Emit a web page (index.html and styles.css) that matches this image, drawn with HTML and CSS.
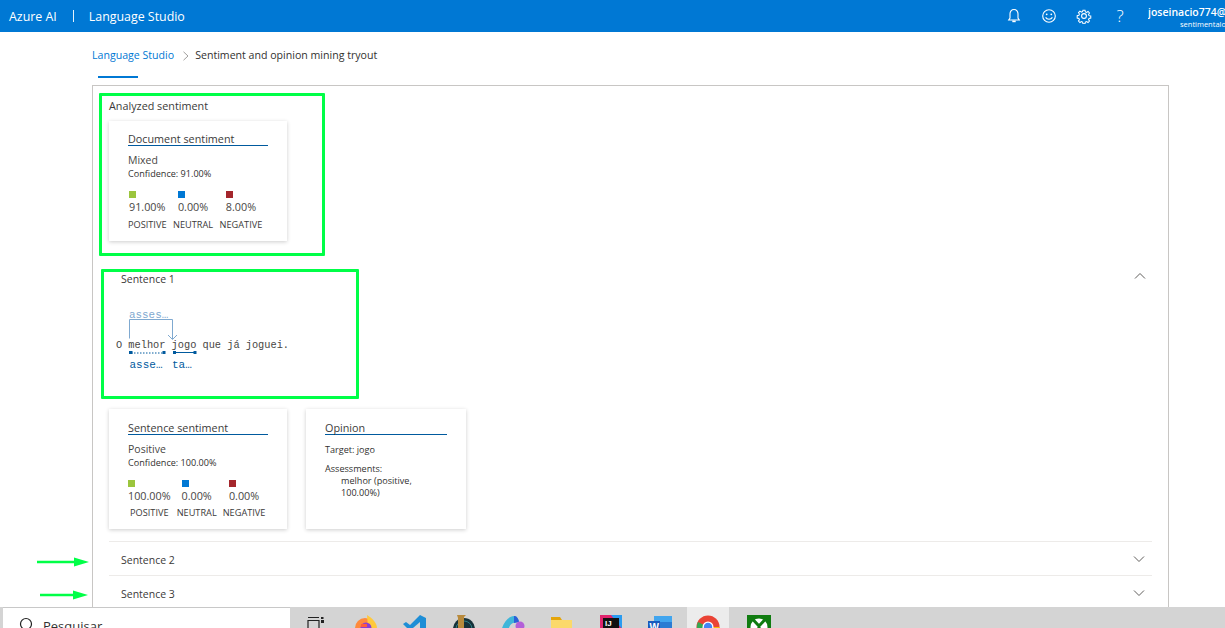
FILE: index.html
```html
<!DOCTYPE html>
<html lang="pt">
<head>
<meta charset="utf-8">
<title>Language Studio</title>
<link rel="stylesheet" href="styles.css">
</head>
<body>
<header class="topbar">
  <span class="brand">Azure AI</span>
  <span class="brand-sep"></span>
  <span class="brand">Language Studio</span>
  <div class="top-icons">
    <svg class="ti" width="16" height="16" viewBox="0 0 16 16"><path d="M8 1.500c-2.600 0-4 2-4 4.300V10l-1.300 2h10.600L12 10V5.800c0-2.300-1.400-4.300-4-4.300z" fill="none" stroke="#fff" stroke-width="1.100"/><path d="M6.300 12.500h3.400v1.700H6.300z" fill="#fff"/></svg>
    <svg class="ti" width="16" height="16" viewBox="0 0 16 16"><circle cx="8" cy="8" r="6.300" fill="none" stroke="#fff" stroke-width="1.100"/><circle cx="5.700" cy="6.300" r=".9" fill="#fff"/><circle cx="10.300" cy="6.300" r=".9" fill="#fff"/><path d="M4.600 9.400c1.500 2.500 5.300 2.500 6.800 0" fill="none" stroke="#fff" stroke-width="1.100"/></svg>
    <svg class="ti" width="16" height="16" viewBox="0 0 16 16"><circle cx="8" cy="8" r="2.400" fill="none" stroke="#fff" stroke-width="1.100"/><path d="M6.800 1.300h2.400l.4 2 1.400.6 1.700-1.100 1.700 1.700-1.100 1.700.6 1.400 2 .4v2.400l-2 .4-.6 1.400 1.100 1.700-1.700 1.700-1.700-1.100-1.400.6-.4 2H6.800l-.4-2-1.400-.6-1.700 1.100-1.700-1.700 1.100-1.700-.6-1.400-2-.4V7.600l2-.4.6-1.400-1.100-1.700 1.700-1.700L5 3.500l1.400-.6z" transform="translate(1.100 1.100) scale(.86)" fill="none" stroke="#fff" stroke-width="1.200"/></svg>
    <span class="help">?</span>
  </div>
  <div class="user">
    <span class="user-name">joseinacio774@</span>
    <span class="user-sub">sentimentalo</span>
  </div>
</header>

<nav class="crumbs">
  <span class="crumb-link">Language Studio</span>
  <svg class="crumb-sep" width="8" height="10" viewBox="0 0 8 10"><path d="M1.500 .8 6 5 1.500 9.200" fill="none" stroke="#a19f9d" stroke-width="1"/></svg>
  <span class="crumb-cur">Sentiment and opinion mining tryout</span>
</nav>
<div class="tab-mark"></div>

<main class="panel">
  <h2 class="panel-title">Analyzed sentiment</h2>
  <section class="card doc-card">
    <h3 class="card-title">Document sentiment</h3>
    <div class="verdict">Mixed</div>
    <div class="conf">Confidence: 91.00%</div>
    <div class="scores">
      <div class="score"><div class="val"><i class="sq green"></i><span class="pct">91.00%</span></div><span class="lab">POSITIVE</span></div>
      <div class="score"><div class="val"><i class="sq blue"></i><span class="pct">0.00%</span></div><span class="lab">NEUTRAL</span></div>
      <div class="score"><div class="val"><i class="sq red"></i><span class="pct">8.00%</span></div><span class="lab">NEGATIVE</span></div>
    </div>
  </section>

  <div class="acc-head first">
    <span>Sentence 1</span>
    <svg class="chev-up" width="12" height="8" viewBox="0 0 12 8"><path d="M1 6.500 6 1.500l5 5" fill="none" stroke="#605e5c" stroke-width="1"/></svg>
  </div>
  <svg class="dep" width="200" height="88" viewBox="0 0 200 88">
    <text class="dep-top" x="13" y="20">asses…</text>
    <path d="M13.500 40.500V21.500H56.500V41" fill="none" stroke="#7fa9d0" stroke-width="1"/>
    <path d="M52 37l4.500 4.500L61 37" fill="none" stroke="#7fa9d0" stroke-width="1"/>
    <text class="dep-text" x="0" y="50">O melhor jogo que já joguei.</text>
    <path d="M15 55H49" stroke="#005a9e" stroke-width="1" stroke-dasharray="1.500 1.500"/>
    <rect x="13" y="53" width="3.500" height="3" fill="#005a9e"/>
    <rect x="46.500" y="53" width="3" height="3" fill="#005a9e"/>
    <path d="M58 54.500H80" stroke="#005a9e" stroke-width="1"/>
    <rect x="57" y="53" width="3" height="3" fill="#005a9e"/>
    <rect x="77.500" y="53" width="3" height="3" fill="#005a9e"/>
    <text class="dep-lab" x="13.500" y="69.500">asse…</text>
    <text class="dep-lab" x="56" y="69.500">ta…</text>
  </svg>

  <div class="card-row">
    <section class="card doc-card">
      <h3 class="card-title">Sentence sentiment</h3>
      <div class="verdict">Positive</div>
      <div class="conf">Confidence: 100.00%</div>
      <div class="scores">
        <div class="score"><div class="val"><i class="sq green"></i><span class="pct">100.00%</span></div><span class="lab">POSITIVE</span></div>
        <div class="score"><div class="val"><i class="sq blue"></i><span class="pct">0.00%</span></div><span class="lab">NEUTRAL</span></div>
        <div class="score"><div class="val"><i class="sq red"></i><span class="pct">0.00%</span></div><span class="lab">NEGATIVE</span></div>
      </div>
    </section>
    <section class="card op-card">
      <h3 class="card-title">Opinion</h3>
      <div class="op-line">Target: jogo</div>
      <div class="op-line op-gap">Assessments:</div>
      <div class="op-ind">melhor (positive, 100.00%)</div>
    </section>
  </div>

  <div class="acc-head rule">
    <span>Sentence 2</span>
    <svg width="12" height="8" viewBox="0 0 12 8"><path d="M1 1.500 6 6.500l5-5" fill="none" stroke="#605e5c" stroke-width="1"/></svg>
  </div>
  <div class="acc-head rule">
    <span>Sentence 3</span>
    <svg width="12" height="8" viewBox="0 0 12 8"><path d="M1 1.500 6 6.500l5-5" fill="none" stroke="#605e5c" stroke-width="1"/></svg>
  </div>
</main>

<div class="mark box-a"></div>
<div class="mark box-b"></div>
<svg class="arrow arrow-a" width="54" height="10" viewBox="0 0 54 10"><path d="M0 5H40" stroke="#00ff47" stroke-width="2.500"/><path d="M37 .5 52 5 37 9.500z" fill="#00ff47"/></svg>
<svg class="arrow arrow-b" width="50" height="10" viewBox="0 0 50 10"><path d="M0 5H36" stroke="#00ff47" stroke-width="2.500"/><path d="M33 .5 48 5 33 9.500z" fill="#00ff47"/></svg>

<footer class="taskbar">
  <div class="search">
    <svg width="16" height="16" viewBox="0 0 16 16"><circle cx="7" cy="7" r="5.500" fill="none" stroke="#222" stroke-width="1.200"/></svg>
    <span>Pesquisar</span>
  </div>
  <div class="tray">
    <div class="tk tk-view"><svg width="20" height="20" viewBox="0 0 20 20"><path d="M2 2.500h11M2 5.500h11v9H2z" fill="none" stroke="#222" stroke-width="1.200"/><rect x="15" y="2" width="2.500" height="2" fill="#222"/><rect x="15" y="5" width="3" height="3" fill="#222"/></svg></div>
    <div class="tk"><svg width="24" height="24" viewBox="0 0 24 24"><circle cx="11" cy="13" r="10" fill="#ff8a3c"/><path d="M13 0c5 3 10 8 10 13H14z" fill="#ffc93c"/><circle cx="12" cy="13" r="5.500" fill="#8a3fd1"/><path d="M7 9h6v3H7z" fill="#ff5c39"/></svg></div>
    <div class="tk"><svg width="24" height="24" viewBox="0 0 24 24"><path d="M17 0 7 10 3 7 0 9l4 4-4 4 3 2 4-3 10 9 6-3V3z" fill="#1e8ed6"/><path d="M17 7v12l-7-6z" fill="#d4d4d4"/></svg></div>
    <div class="tk"><svg width="24" height="24" viewBox="0 0 24 24"><circle cx="12" cy="14" r="11" fill="#16323a"/><circle cx="12" cy="14" r="8" fill="none" stroke="#2f7f86" stroke-width="1"/><path d="M5 0h9l-2 2v15h6l-2 4H5l1-3V3z" fill="#b88a3c"/></svg></div>
    <div class="tk"><svg width="24" height="24" viewBox="0 0 24 24"><path d="M0 18C1 9 7 1 13 1c2 0 4 1 5 6l-6 1c-3 1-5 5-5 12z" fill="#3fb6d9"/><path d="M13 1c2 0 4 1 5 6l-5 1z" fill="#2c5fd8"/><circle cx="19" cy="11" r="4.500" fill="#b45fd8"/></svg></div>
    <div class="tk"><svg width="24" height="24" viewBox="0 0 24 24"><path d="M1 2h9l2 3H1z" fill="#e5a50a"/><path d="M1 5h21v16H1z" fill="#fbd96a"/></svg></div>
    <div class="tk"><svg width="22" height="22" viewBox="0 0 22 22"><path d="M0 0h22v22H0z" fill="#e0246e"/><path d="M11 0h11v14z" fill="#2a9bf0"/><rect x="3" y="3" width="16" height="16" fill="#111"/><text class="ij" x="5" y="11">IJ</text></svg></div>
    <div class="tk"><svg width="24" height="24" viewBox="0 0 24 24"><path d="M6 1h18v20H6z" fill="#2b7cd3"/><path d="M6 1h18v6H6z" fill="#41a5ee"/><rect x="0" y="6" width="12" height="12" fill="#185abd"/><text class="wd" x="1.500" y="16">W</text></svg></div>
    <div class="tk tk-active"><svg width="24" height="24" viewBox="0 0 24 24"><circle cx="12" cy="12" r="11.500" fill="#ea4335"/><path d="M12 12 2 7A11.500 11.500 0 0 0 9 23z" fill="#34a853"/><path d="M12 12h11.500A11.500 11.500 0 0 1 9 23z" fill="#fbbc05"/><circle cx="12" cy="12" r="5.500" fill="#fff"/><circle cx="12" cy="12" r="4.200" fill="#4285f4"/></svg></div>
    <div class="tk tk-xbox"><svg width="24" height="24" viewBox="0 0 24 24"><rect width="24" height="24" fill="#107c10"/><circle cx="12" cy="12" r="8.500" fill="#fff"/><path d="M5 3.500 12 11l7-7.500M5 20.500 12 13l7 7.500" fill="none" stroke="#107c10" stroke-width="3"/></svg></div>
  </div>
</footer>
</body>
</html>
```
FILE: styles.css
```css
* { box-sizing: border-box; }
html, body { margin: 0; height: 628px; overflow: hidden; }
body {
  position: relative;
  width: 1225px;
  background: #fff;
  color: #323130;
  font-family: "Open Sans", "Noto Sans", "Liberation Sans", sans-serif;
  font-size: 10px;
}
h2, h3 { margin: 0; font-weight: 400; }

.topbar {
  height: 32px;
  background: #0078d4;
  color: #fff;
  display: flex;
  align-items: center;
  padding-left: 9px;
  overflow: hidden;
}
.brand { font-size: 12.400px; }
.brand-sep { width: 1px; height: 12px; background: #e6f2fb; margin: 0 15px 0 16px; }
.top-icons { margin-left: auto; display: flex; align-items: center; gap: 19px; }
.ti { display: block; }
.help { font-size: 17px; font-weight: 300; line-height: 20px; width: 12px; text-align: center; margin-left: 3px; }
.user {
  width: 77px;
  margin-left: 22px;
  display: flex;
  flex-direction: column;
  align-items: flex-start;
  overflow: hidden;
  white-space: nowrap;
  padding-top: 2px;
}
.user-name { font-size: 10.500px; font-weight: 600; line-height: 13px; }
.user-sub { font-size: 7.500px; line-height: 10px; margin-left: 32px; }

.crumbs {
  height: 44px;
  padding: 15px 0 0 92px;
  display: flex;
  align-items: flex-start;
  font-size: 10.600px;
  line-height: 16px;
}
.crumb-link { color: #0078d4; }
.crumb-sep { margin: 4px 5px 0 8px; }
.tab-mark { width: 40px; height: 2px; margin-left: 98px; background: #0078d4; }

.panel {
  height: 542px;
  margin: 7px 56px 0 92px;
  border: 1px solid #c8c6c4;
  padding: 12px 16px 0;
}
.panel-title { font-size: 10.800px; font-weight: 500; line-height: 16px; height: 23px; color: #3b3a39; }

.card {
  background: #fff;
  height: 120px;
  box-shadow: 0 1px 4px rgba(0, 0, 0, .2);
  padding: 11px 19px 0;
}
.doc-card { width: 178px; }
.op-card { width: 160px; }
.card-title {
  font-size: 10.800px;
  font-weight: 500;
  line-height: 13px;
  color: #3b3a39;
  border-bottom: 1px solid #005a9e;
}
.verdict { font-size: 10.500px; line-height: 14px; margin-top: 7px; color: #484644; }
.conf { font-size: 9.100px; line-height: 12px; margin-top: 1px; }

.scores { display: flex; gap: 6.500px; margin-top: 11px; }
.score { display: flex; flex-direction: column; align-items: center; }
.val { display: flex; flex-direction: column; }
.sq { display: block; width: 7px; height: 7px; }
.green { background: #9bc53d; }
.blue { background: #0078d4; }
.red { background: #a4262c; }
.pct { font-size: 10.800px; line-height: 14px; margin-top: 2px; color: #484644; }
.lab { font-size: 9.200px; line-height: 12px; margin-top: 5px; color: #3b3a39; }

.acc-head {
  display: flex;
  align-items: center;
  justify-content: space-between;
  height: 34px;
  padding: 0 7px 0 12px;
  font-size: 10.500px;
  color: #3b3a39;
}
.first { margin-top: 21px; }
.chev-up { margin: 0 -1px 6px 0; }
.rule { border-top: 1px solid #edebe9; }
.rule span { margin-top: 2px; }

.dep { display: block; margin: 2px 0 0 7px; height: 88px; }
.dep-text { font-family: "Liberation Mono", monospace; font-size: 10.300px; fill: #484644; }
.dep-top { font-family: "Liberation Mono", monospace; font-size: 10.900px; fill: #7fa9d0; }
.dep-lab { font-family: "Liberation Mono", monospace; font-size: 11px; fill: #005a9e; }

.card-row { display: flex; gap: 19px; margin-top: 23px; height: 132px; }
.card-row .card { padding-top: 12px; }
.card-row .lab { margin-top: 4px; }
.card-row .scores { gap: 6px; }

.op-line { font-size: 9.100px; line-height: 12px; margin-top: 9px; }
.op-gap { margin-top: 7px; }
.op-ind { font-size: 9.100px; line-height: 12px; margin-left: 16px; }

.mark { position: absolute; border: 3px solid #00ff47; border-radius: 1px; }
.box-a { left: 99px; top: 93px; width: 226px; height: 163px; }
.box-b { left: 101px; top: 269px; width: 258px; height: 130px; }
.arrow { position: absolute; }
.arrow-a { left: 37px; top: 557px; }
.arrow-b { left: 40px; top: 590px; }

.taskbar {
  position: absolute;
  left: 0;
  right: 0;
  bottom: 0;
  height: 21px;
  background: #d4d4d4;
  display: flex;
  overflow: hidden;
}
.search {
  width: 287px;
  margin-left: 3px;
  background: #fff;
  border-top: 1px solid #c8c8c8;
  padding: 9px 0 0 16px;
  display: flex;
  align-items: flex-start;
  gap: 8px;
  font-size: 13px;
  line-height: 18px;
}
.search svg { flex: none; }
.tray { display: flex; }
.tk {
  width: 49px;
  height: 21px;
  display: flex;
  justify-content: center;
  padding-top: 8px;
  flex: none;
}
.tk svg { flex: none; }
.tk-view { width: 51px; }
.tk-active { background: #ececec; width: 42px; margin: 0 3px; }
.tk-xbox { margin-left: 2px; }
.ij { font-family: "Liberation Sans", sans-serif; font-size: 8px; font-weight: 700; fill: #fff; }
.wd { font-family: "Liberation Sans", sans-serif; font-size: 10px; font-weight: 700; fill: #fff; }
```
